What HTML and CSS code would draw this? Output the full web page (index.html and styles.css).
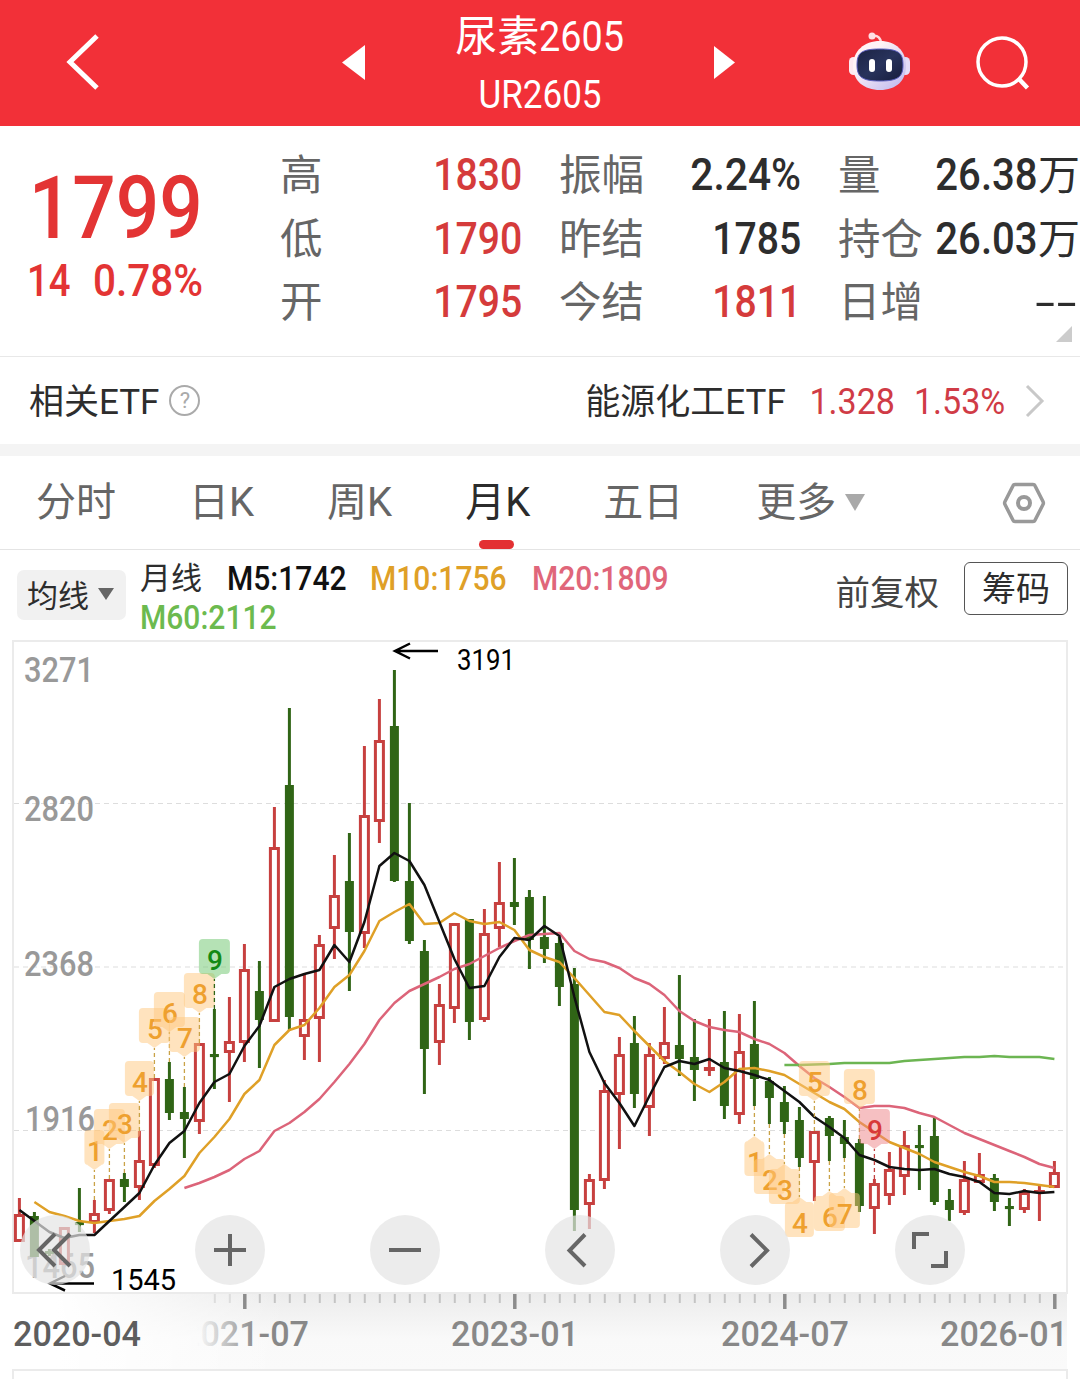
FILE: index.html
```
<!DOCTYPE html>
<html lang="zh-CN">
<head>
  <meta charset="UTF-8">
  <meta name="viewport" content="width=device-width, initial-scale=1.0">
  <title>尿素2605</title>
  <link rel="stylesheet" href="styles.css">
</head>
<body>

<header class="topbar">
  <svg class="back" width="36" height="60" viewBox="0 0 36 60"><path d="M33 3 6 29l27 26" fill="none" stroke="#fff" stroke-width="5"/></svg>
  <svg class="prev" width="24" height="36" viewBox="0 0 24 36"><path d="M23 0v35L0 17.500z" fill="#fff"/></svg>
  <div class="title">
    <h1>尿素<span>2605</span></h1>
    <p>UR2605</p>
  </div>
  <svg class="next" width="22" height="34" viewBox="0 0 22 34"><path d="M0 0v33l21-16.500z" fill="#fff"/></svg>
  <svg class="robot" width="64" height="62" viewBox="0 0 64 62">
    <defs>
      <linearGradient id="shell" x1="0" y1="0" x2="1" y2="1">
        <stop offset="0.300" stop-color="#fff3f6"/>
        <stop offset="1" stop-color="#b9b4ee"/>
      </linearGradient>
      <linearGradient id="visor" x1="0" y1="0" x2="1" y2="1">
        <stop offset="0" stop-color="#1c2344"/>
        <stop offset="0.500" stop-color="#28335c"/>
        <stop offset="1" stop-color="#171c3c"/>
      </linearGradient>
    </defs>
    <path d="M24 4c6-1 9 2 9 8" fill="none" stroke="#ffd9de" stroke-width="2.500"/>
    <circle cx="24" cy="4" r="3.500" fill="#ffdfe4"/>
    <rect x="1" y="25" width="9" height="18" rx="4.500" fill="#fde9f0"/>
    <rect x="53" y="25" width="9" height="18" rx="4.500" fill="#e4dcf8"/>
    <path d="M32 9c16 0 26 10 26 25S48 58 32 58 5 49 5 34 16 9 32 9z" fill="url(#shell)"/>
    <path d="M32 17c19 0 23 4 23 16s-5 16-23 16S9 45 9 33s4-16 23-16z" fill="url(#visor)" stroke="#5b5fc0" stroke-width="1"/>
    <rect x="21" y="27" width="6" height="13" rx="3" fill="#fff"/>
    <rect x="38" y="27" width="6" height="13" rx="3" fill="#fff"/>
  </svg>
  <svg class="search" width="56" height="56" viewBox="0 0 56 56" fill="none" stroke="#fff">
    <circle cx="26" cy="27" r="24" stroke-width="3.500"/>
    <path d="M42 43l9.500 10" stroke-width="4.500"/>
  </svg>
</header>

<section class="quote">
  <div class="last">
    <strong class="num">1799</strong>
    <div class="change"><span class="num">14</span><span class="num rate">0.78%</span></div>
  </div>
  <dl class="stats">
    <div><dt>高</dt><dd class="num up">1830</dd></div>
    <div><dt>振幅</dt><dd class="num rate">2.24%</dd></div>
    <div><dt>量</dt><dd><span class="num">26.38</span>万</dd></div>
    <div><dt>低</dt><dd class="num up">1790</dd></div>
    <div><dt>昨结</dt><dd class="num">1785</dd></div>
    <div><dt>持仓</dt><dd><span class="num">26.03</span>万</dd></div>
    <div><dt>开</dt><dd class="num up">1795</dd></div>
    <div><dt>今结</dt><dd class="num up">1811</dd></div>
    <div><dt>日增</dt><dd class="empty">--</dd></div>
  </dl>
  <i class="corner"></i>
</section>

<section class="etf">
  <span class="etf-label">相关ETF</span>
  <span class="help">?</span>
  <span class="etf-name">能源化工ETF</span>
  <span class="etf-price">1.328</span>
  <span class="etf-rate">1.53%</span>
  <svg width="20" height="34" viewBox="0 0 20 34"><path d="M2 2l15 15L2 32" fill="none" stroke="#c8c8c8" stroke-width="3"/></svg>
</section>

<nav class="tabs">
  <a>分时</a>
  <a>日K</a>
  <a>周K</a>
  <a class="active">月K</a>
  <a>五日</a>
  <a class="more">更多<i></i></a>
  <svg class="setting" width="44" height="44" viewBox="0 0 44 44" fill="none" stroke="#999">
    <path d="M13 3.500h18q1.500 0 2 1.200L41 20.500q.8 1.500 0 3L33 39.300q-.5 1.200-2 1.200H13q-1.500 0-2-1.200L3 23.500q-.8-1.500 0-3L11 4.700q.5-1.200 2-1.200z" stroke-width="3.500"/>
    <circle cx="22" cy="22" r="6" stroke-width="4"/>
  </svg>
</nav>

<section class="legend">
  <button class="ma-btn">均线<i></i></button>
  <div class="ma-list">
    <span class="cycle">月线</span>
    <span class="m5">M5:1742</span>
    <span class="m10">M10:1756</span>
    <span class="m20">M20:1809</span>
    <span class="m60">M60:2112</span>
  </div>
  <span class="adjust">前复权</span>
  <button class="chips">筹码</button>
</section>

<section class="chart">
  <div class="axis-bg"></div>
  <svg id="kline" width="1080" height="739" viewBox="0 640 1080 739"></svg>
  <div class="tools">
    <button><svg viewBox="0 0 70 70"><path d="M35 19 19 35l16 16M50 19 34 35l16 16"/></svg></button>
    <button><svg viewBox="0 0 70 70"><path d="M19 35h32M35 19v32"/></svg></button>
    <button><svg viewBox="0 0 70 70"><path d="M19 35h32"/></svg></button>
    <button><svg viewBox="0 0 70 70"><path d="M40 19.500 24.500 35.500 40 51"/></svg></button>
    <button><svg viewBox="0 0 70 70"><path d="M31 19.500l16 16L31 51.500"/></svg></button>
    <button><svg viewBox="0 0 70 70"><path d="M34 19H19v15M36 51h15V36"/></svg></button>
  </div>
</section>

<script src="chart.js"></script>
</body>
</html>
```

FILE: styles.css
```
* {
  box-sizing: border-box;
}
body {
  margin: 0;
  width: 1080px;
  background: #fff;
  color: #2d2d2d;
  font-family: Roboto, "Noto Sans CJK SC", sans-serif;
}
h1, p, dl, dd {
  margin: 0;
}
button {
  border: none;
  padding: 0;
  font-family: inherit;
  color: inherit;
}
.num {
  font-weight: 500;
  transform: scaleX(0.880);
  transform-origin: right center;
}
.up {
  color: #d53b3b;
}

/* header */
.topbar {
  display: flex;
  align-items: center;
  height: 126px;
  background: #f23038;
  color: #fff;
}
.back {
  margin-left: 64px;
}
.prev {
  margin-left: 242px;
}
.title {
  width: 348px;
  padding-top: 5px;
  text-align: center;
}
.title h1 {
  font-size: 42px;
  line-height: 59px;
  font-weight: 400;
}
.title h1 span {
  display: inline-block;
  margin-right: -9px;
  transform: scaleX(0.900);
  transform-origin: left center;
}
.title p {
  font-size: 38.500px;
  line-height: 58px;
  transform: scaleX(0.910);
}
.robot {
  margin-left: 112px;
}
.search {
  margin-left: 64px;
}

/* quote */
.quote {
  position: relative;
  display: flex;
  height: 231px;
  border-bottom: 1px solid #e8e8e8;
}
.last {
  width: 281px;
  padding: 37px 0 0 27px;
  color: #e33434;
}
.last .num {
  transform-origin: left center;
}
.last strong {
  display: block;
  padding-left: 2px;
  font-size: 87px;
  line-height: 90px;
}
.change {
  display: flex;
  gap: 17px;
  font-size: 43.500px;
  line-height: 58px;
}
.change .rate {
  transform: scaleX(0.930);
}
.stats {
  display: grid;
  grid-template-columns: repeat(3, 242px);
  grid-auto-rows: 63.500px;
  column-gap: 37px;
  padding-top: 18px;
}
.stats div {
  display: flex;
  justify-content: space-between;
  align-items: center;
  font-size: 42.500px;
  line-height: 63px;
  white-space: nowrap;
}
.stats dt {
  color: #666;
}
.stats dd {
  font-size: 44.500px;
}
.stats .rate {
  transform: scaleX(0.915);
}
.stats dd:not(.num) {
  font-size: 42px;
}
.stats dd .num {
  display: inline-block;
  font-size: 44.500px;
  margin-left: -20px;
  transform: scaleX(0.900);
}
.stats .empty {
  letter-spacing: 1px;
  margin-right: 2px;
  transform: scaleX(1.700);
  transform-origin: right center;
}
.corner {
  position: absolute;
  right: 8px;
  bottom: 14px;
  border-left: 16px solid transparent;
  border-bottom: 16px solid #ccc;
}

/* etf */
.etf {
  display: flex;
  align-items: center;
  height: 99px;
  padding: 0 35px 0 29px;
  border-bottom: 12px solid #f4f4f4;
  font-size: 35px;
}
.etf-label, .etf-name {
  padding-bottom: 4px;
}
.help {
  width: 31px;
  height: 31px;
  margin-left: 10px;
  border: 2px solid #aaa;
  border-radius: 50%;
  color: #aaa;
  font-size: 22px;
  line-height: 28px;
  text-align: center;
}
.etf-name {
  margin-left: auto;
}
.etf-price, .etf-rate {
  padding-top: 2px;
  color: #d03b46;
  font-size: 37px;
  transform: scaleX(0.920);
  transform-origin: right center;
}
.etf-price {
  margin-left: 16px;
}
.etf-rate {
  margin: 0 20px 0 11px;
}

/* tabs */
.tabs {
  display: flex;
  align-items: center;
  gap: 73px;
  height: 94px;
  padding-left: 36px;
  border-bottom: 1px solid #e4e4e4;
  color: #666;
  font-size: 40px;
  line-height: 97px;
}
.tabs a {
  position: relative;
}
.tabs .active {
  color: #2b2b2b;
}
.tabs .active::after {
  content: "";
  position: absolute;
  left: 14px;
  bottom: 2px;
  width: 35px;
  height: 9px;
  border-radius: 5px;
  background: #e33032;
}
.tabs .more {
  display: flex;
  align-items: center;
}
.more i {
  margin-left: 9px;
  border: 10px solid transparent;
  border-top: 17px solid #a9a9a9;
  border-bottom: 0;
}
.setting {
  margin-left: auto;
  margin-right: 34px;
}

/* moving averages */
.legend {
  display: flex;
  height: 90px;
  padding: 12px 12px 0 17px;
}
.ma-btn {
  display: flex;
  align-items: center;
  width: 109px;
  height: 50px;
  margin-top: 8px;
  padding: 0 0 3px 10px;
  border-radius: 7px;
  background: #f1f1f1;
  font-size: 31px;
}
.ma-btn i {
  margin-left: 9px;
  border: 8px solid transparent;
  border-top: 12px solid #666;
  border-bottom: 0;
}
.ma-list {
  display: flex;
  flex-wrap: wrap;
  align-content: flex-start;
  column-gap: 12px;
  width: 570px;
  margin: -3px 0 0 14px;
  font-size: 33px;
  font-weight: 500;
  line-height: 39px;
}
.ma-list span {
  transform: scaleX(0.910);
  transform-origin: left center;
}
.ma-list .cycle {
  margin-right: 13px;
  font-size: 31px;
  font-weight: 400;
  transform: none;
}
.m5 {
  color: #111;
}
.m10 {
  color: #dfa027;
}
.m20 {
  color: #e0667a;
}
.m60 {
  color: #6cba4f;
}
.adjust {
  margin-left: auto;
  font-size: 34.500px;
  line-height: 62px;
  color: #444;
}
.chips {
  width: 104px;
  height: 53px;
  margin-left: 25px;
  border: 1.500px solid #555;
  border-radius: 6px;
  background: #fff;
  font-size: 34px;
  line-height: 50px;
}

/* chart */
.chart {
  position: relative;
  height: 739px;
}
.axis-bg {
  position: absolute;
  left: 14px;
  top: 654px;
  width: 1053px;
  height: 75px;
  background: linear-gradient(to right, #fff 4%, rgba(255, 255, 255, 0) 26%), linear-gradient(#ececec, #f9f9f9 60%, #fafafa);
}
#kline {
  position: absolute;
  left: 0;
  top: 0;
}
.grid {
  stroke: #ddd;
  stroke-dasharray: 5 4;
}
.frame {
  fill: none;
  stroke: #ebebeb;
  stroke-width: 2;
}
.price, .date {
  font-size: 34.500px;
  font-weight: 500;
}
.price {
  fill: #999;
}
.peak {
  font-size: 29px;
  fill: #000;
}
.arrow {
  fill: none;
  stroke: #000;
  stroke-width: 2.500;
}
.rise {
  fill: #fff;
  stroke: #c7403f;
  stroke-width: 3;
}
.fall {
  fill: #306516;
  stroke: #306516;
  stroke-width: 3;
}
.ma {
  fill: none;
  stroke-width: 2.500;
  stroke-linejoin: round;
}
.tag path {
  fill: #ffc77d;
  fill-opacity: 0.5;
}
.tag line {
  stroke: #c9a247;
  stroke-width: 1.300;
  stroke-dasharray: 4 3;
}
.tag text {
  fill: #eea02f;
  font-size: 28px;
  font-weight: 500;
  text-anchor: middle;
}
.tag.green path {
  fill: #6cc56c;
}
.tag.green text {
  fill: #138a13;
}
.tag.green line {
  stroke: #306516;
}
.tag.red path {
  fill: #ee8186;
}
.tag.red text {
  fill: #d83838;
}
.tag.red line {
  stroke: #c14341;
}
.tools {
  position: absolute;
  left: 20px;
  top: 575px;
  display: flex;
  gap: 105px;
}
.tools button {
  width: 70px;
  height: 70px;
  border-radius: 50%;
  background: rgba(228, 228, 228, 0.7);
}
.tools svg {
  display: block;
  fill: none;
  stroke: #666;
  stroke-width: 4;
}
```

FILE: chart.js
```
const svg = document.getElementById("kline");
const x = i => 19.4 + 15 * i;

// r/g, high, body top, body bottom, low
const candles = [
  ["r", 1198, 1214, 1242, 1242], ["g", 1212, 1216, 1257, 1257], ["g", 1249, 1251, 1254, 1256], ["r", 1227, 1227, 1265, 1265],
  ["g", 1188, 1222, 1224, 1232], ["r", 1200, 1213, 1223, 1233], ["r", 1179, 1179, 1211, 1214], ["g", 1173, 1179, 1187, 1202],
  ["r", 1131, 1160, 1188, 1200], ["r", 1078, 1078, 1166, 1168], ["g", 1062, 1079, 1113, 1120], ["g", 1087, 1112, 1119, 1158],
  ["r", 1043, 1043, 1122, 1134], ["g", 1009, 1054, 1057, 1089], ["r", 997, 1041, 1053, 1102], ["r", 944, 969, 1043, 1062],
  ["g", 961, 991, 1020, 1068], ["r", 807, 847, 1022, 1022], ["g", 708, 785, 1017, 1031], ["r", 973, 1019, 1037, 1060],
  ["r", 935, 944, 1019, 1062], ["r", 855, 895, 929, 959], ["g", 833, 881, 932, 991], ["r", 746, 815, 934, 948],
  ["r", 699, 740, 822, 843], ["g", 670, 726, 881, 882], ["g", 803, 881, 941, 944], ["g", 940, 951, 1049, 1094],
  ["r", 984, 1004, 1043, 1065], ["r", 923, 923, 1009, 1023], ["g", 919, 919, 1022, 1040], ["r", 909, 933, 1020, 1022],
  ["r", 862, 902, 929, 947], ["g", 858, 902, 907, 925], ["g", 890, 897, 940, 969], ["g", 896, 937, 949, 963],
  ["g", 937, 943, 987, 1006], ["g", 968, 984, 1210, 1231], ["r", 1174, 1179, 1205, 1229], ["r", 1080, 1090, 1181, 1189],
  ["r", 1037, 1054, 1095, 1149], ["g", 1016, 1043, 1094, 1108], ["r", 1043, 1054, 1108, 1136], ["r", 1007, 1042, 1059, 1064],
  ["g", 975, 1045, 1059, 1076], ["g", 1019, 1057, 1070, 1101], ["r", 1019, 1067, 1071, 1076], ["g", 1011, 1062, 1106, 1119],
  ["r", 1014, 1051, 1115, 1124], ["g", 1001, 1044, 1079, 1106], ["g", 1077, 1081, 1098, 1124], ["g", 1086, 1102, 1122, 1134],
  ["g", 1107, 1120, 1158, 1167], ["r", 1131, 1131, 1163, 1201], ["g", 1116, 1118, 1136, 1161], ["g", 1120, 1137, 1144, 1158],
  ["g", 1139, 1143, 1206, 1212], ["r", 1179, 1183, 1209, 1234], ["r", 1152, 1169, 1196, 1205], ["r", 1131, 1145, 1177, 1195],
  ["g", 1125, 1145, 1147, 1190], ["g", 1118, 1136, 1202, 1205], ["g", 1189, 1200, 1210, 1221], ["r", 1161, 1179, 1213, 1215],
  ["r", 1153, 1174, 1183, 1183], ["g", 1174, 1178, 1202, 1211], ["g", 1198, 1206, 1208, 1226], ["r", 1189, 1192, 1210, 1213],
  ["r", 1186, 1190, 1193, 1221], ["r", 1161, 1172, 1188, 1188]
];

const lines = [
  { color: "#dfa027", from: 1, y: [1202, 1212, 1216, 1221, 1223, 1221, 1219, 1216, 1201, 1189, 1176, 1153, 1137, 1119, 1094, 1080, 1045, 1030, 1025, 1008, 987, 975, 951, 921, 912, 904, 924, 923, 913, 921, 924, 922, 930, 950, 957, 962, 978, 995, 1012, 1015, 1031, 1046, 1061, 1072, 1084, 1092, 1082, 1069, 1068, 1071, 1075, 1084, 1093, 1102, 1109, 1122, 1132, 1142, 1148, 1154, 1162, 1167, 1172, 1176, 1182, 1182, 1183, 1185, 1187] },
  { color: "#dc6479", from: 11, y: [1188, 1183, 1177, 1170, 1159, 1151, 1131, 1123, 1112, 1099, 1082, 1064, 1044, 1020, 1003, 991, 984, 977, 969, 964, 956, 948, 941, 935, 934, 933, 951, 959, 962, 968, 978, 984, 995, 1011, 1021, 1027, 1030, 1032, 1039, 1044, 1053, 1066, 1078, 1087, 1097, 1108, 1106, 1106, 1108, 1113, 1117, 1125, 1133, 1139, 1145, 1151, 1157, 1164, 1168] },
  { color: "#6cb552", from: 51, y: [1065, 1065, 1064.5, 1064, 1063, 1063, 1063, 1063, 1061, 1060, 1059, 1058, 1057, 1057, 1056, 1057, 1057, 1057, 1059] },
  { color: "#111", from: 0, y: [1210, 1221, 1232, 1238, 1235, 1235, 1221, 1207, 1193, 1165, 1143, 1131, 1103, 1082, 1074, 1046, 1026, 987, 979, 974, 970, 945, 962, 922, 866, 853, 861, 885, 922, 959, 988, 986, 957, 938, 940, 926, 936, 997, 1052, 1083, 1103, 1126, 1096, 1067, 1061, 1064, 1059, 1068, 1071, 1075, 1080, 1091, 1102, 1117, 1127, 1138, 1155, 1160, 1167, 1169, 1170, 1169, 1174, 1177, 1182, 1193, 1194, 1191, 1193, 1192] }
];

// candle index, count, side, colour
const tags = [
  [5, 1, "up"], [6, 2, "up"], [7, 3, "up"], [8, 4, "up"], [9, 5, "up"], [10, 6, "up"], [11, 7, "up"], [12, 8, "up"], [13, 9, "up", "green"],
  [49, 1, "down"], [50, 2, "down"], [51, 3, "down"], [52, 4, "down"], [53, 5, "up"], [54, 6, "down"], [55, 7, "down"], [56, 8, "up"], [57, 9, "up", "red"]
];

let out = `<defs>
  <linearGradient id="fade" gradientUnits="userSpaceOnUse" x1="197" y1="0" x2="258" y2="0">
    <stop offset="0" stop-color="#888" stop-opacity="0"/><stop offset="1" stop-color="#888"/>
  </linearGradient></defs>`;

[803.5, 967, 1130.5].forEach(y => {
  out += `<line class="grid" x1="14" x2="1066" y1="${y}" y2="${y}"/>`;
});
out += `<path class="frame" d="M13 641H1067V1293H13zM13 1400V1370H1067V1400"/>`;

[[24, 682, 3271], [24, 821, 2820], [24, 976, 2368], [25, 1131, 1916], [25, 1278, 1465]].forEach(([px, py, t]) => {
  out += `<text class="price" x="${px}" y="${py}" textLength="70" lengthAdjust="spacingAndGlyphs">${t}</text>`;
});

candles.forEach(([c, high, top, bottom, low], i) => {
  const cx = x(i);
  const cls = c === "r" ? "rise" : "fall";
  const w = c === "r" ? 8 : 6;
  out += `<line class="${cls}" x1="${cx}" x2="${cx}" y1="${high}" y2="${low}"/>`;
  const h = Math.max(bottom - top - 3, 0.1);
  out += `<rect class="${cls}" x="${cx - w / 2}" y="${top + 1.5}" width="${w}" height="${h}"/>`;
});

lines.forEach(l => {
  const pts = l.y.map((v, k) => `${x(l.from + k)},${v}`).join(" ");
  out += `<polyline class="ma" stroke="${l.color}" points="${pts}"/>`;
});

tags.forEach(([i, n, side, color]) => {
  const s = side === "up" ? -1 : 1;
  const edge = side === "up" ? candles[i][1] : candles[i][4];
  const tip = edge + 30 * s;
  const cx = x(i);
  const w = n === 1 ? 10 : n === 4 ? 14.5 : 15.5;
  const p = v => tip + v * s;
  out += `<g class="tag ${color || ""}">
    <line x1="${cx}" x2="${cx}" y1="${edge}" y2="${tip}"/>
    <path d="M${cx} ${tip}L${cx - 7} ${p(5)}H${cx - w + 4}Q${cx - w} ${p(5)} ${cx - w} ${p(9)}V${p(36)}Q${cx - w} ${p(40)} ${cx - w + 4} ${p(40)}H${cx + w - 4}Q${cx + w} ${p(40)} ${cx + w} ${p(36)}V${p(9)}Q${cx + w} ${p(5)} ${cx + w - 4} ${p(5)}H${cx + 7}z"/>
    <text x="${cx + 0.5}" y="${side === "up" ? tip - 9 : tip + 36}">${n}</text></g>`;
});

// highest and lowest price
out += `<path class="arrow" d="M438 651H396M410 643.5L395 651l15 7.500M94 1283.500H51M65 1276L50 1283.500l15 7"/>
  <text class="peak" x="457" y="670" textLength="58" lengthAdjust="spacingAndGlyphs">3191</text>
  <text class="peak" x="111" y="1290" textLength="65">1545</text>`;

// time axis
for (let i = 13; i < 70; i++) {
  const major = (i - 15) % 18 === 0;
  out += `<line x1="${x(i) + 0.4}" x2="${x(i) + 0.4}" y1="1294" y2="${major ? 1309 : 1303}" stroke="${major ? "#8c8c8c" : i < 15 ? "#ddd" : "#c4c4c4"}" stroke-width="${major ? 3.5 : 2}"/>`;
}
[[13, "2020-04"], [181, "2021-07"], [451, "2023-01"], [721, "2024-07"], [940, "2026-01"]].forEach(([px, date], k) => {
  // the second label fades out under the first one
  const fill = k === 1 ? "url(#fade)" : k === 0 ? "#5e5e5e" : "#888";
  out += `<text class="date" fill="${fill}" x="${px}" y="1346" textLength="128" lengthAdjust="spacingAndGlyphs">${date}</text>`;
});

svg.innerHTML = out;
```
